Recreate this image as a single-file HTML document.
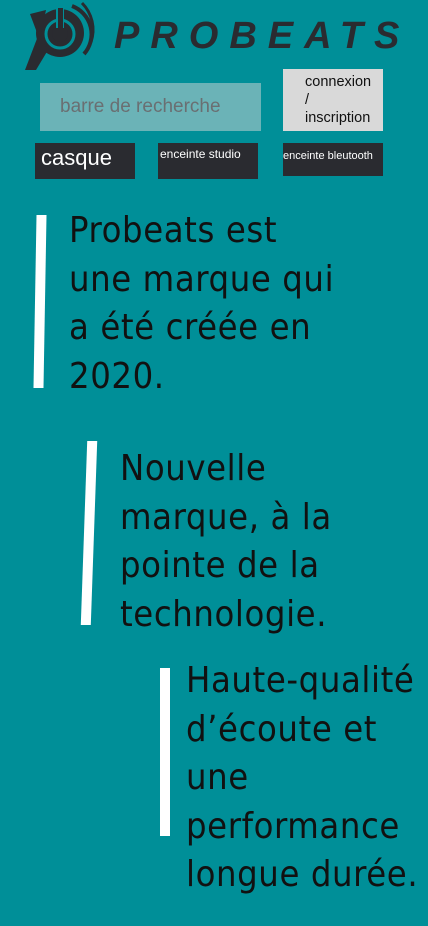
<!DOCTYPE html>
<html><head><style>
body{margin:0;width:428px;height:926px;background:#008f98;position:relative;overflow:hidden;font-family:"Liberation Sans",sans-serif}
.a{position:absolute}
.btn{background:#2a2b30;color:#fff}
.t{position:absolute;font-size:36px;line-height:48.5px;color:#111;font-family:"DejaVu Sans Condensed","Liberation Sans",sans-serif;letter-spacing:0.6px}
.bar{position:absolute;background:#fff}
</style></head><body>
<svg class="a" style="left:0;top:0" width="110" height="72" viewBox="0 0 110 72">
<circle cx="60" cy="33" r="24" fill="#2a2b30"/>
<path d="M36 30 L30 14 L46 10 L40 40 Z" fill="#2a2b30"/>
<path d="M38 36 L48 50 L36 70 L25 70 Z" fill="#2a2b30"/>
<circle cx="60" cy="34" r="14" fill="none" stroke="#008f98" stroke-width="3"/>
<circle cx="60" cy="34" r="8" fill="#2a2b30"/>
<rect x="56" y="8" width="8" height="20" fill="#008f98"/>
<rect x="58" y="8" width="5" height="22" fill="#2a2b30"/>
<path d="M72 6 A30 30 0 0 1 84 54" fill="none" stroke="#2a2b30" stroke-width="4"/>
<path d="M82 3 A38 38 0 0 1 91 42" fill="none" stroke="#2a2b30" stroke-width="3"/>
</svg>
<div class="a" style="left:114px;top:15px;font-size:38px;font-weight:bold;font-style:italic;color:#2a2b30;letter-spacing:11px">PROBEATS</div>
<div class="a" style="left:40px;top:83px;width:221px;height:48px;background:#6bb3b7;color:#6a6f72;font-size:19px;line-height:48px;text-indent:20px">barre de recherche</div>
<div class="a" style="left:283px;top:69px;width:100px;height:62px;background:#d9d9d9;color:#111;font-size:14.5px;line-height:18px;box-sizing:border-box;padding:4px 0 0 22px">connexion<br>/<br>inscription</div>
<div class="a btn" style="left:35px;top:143px;width:100px;height:36px;font-size:22px;line-height:30px;text-indent:6px">casque</div>
<div class="a btn" style="left:158px;top:143px;width:100px;height:36px;font-size:12px;line-height:22px;text-indent:2px">enceinte studio</div>
<div class="a btn" style="left:283px;top:143px;width:100px;height:33px;font-size:11px;line-height:26px;white-space:nowrap">enceinte bleutooth</div>
<div class="bar" style="left:35px;top:215px;width:10px;height:173px;transform:skewX(-1deg)"></div>
<div class="t" style="left:69px;top:207px">Probeats est<br>une marque qui<br>a été créée en<br>2020.</div>
<div class="bar" style="left:84px;top:441px;width:10px;height:184px;transform:skewX(-2deg)"></div>
<div class="t" style="left:120px;top:445px">Nouvelle<br>marque, à la<br>pointe de la<br>technologie.</div>
<div class="bar" style="left:160px;top:668px;width:10px;height:168px"></div>
<div class="t" style="left:186px;top:657px">Haute-qualité<br>d’écoute et<br>une<br>performance<br>longue durée.</div>
</body></html>
